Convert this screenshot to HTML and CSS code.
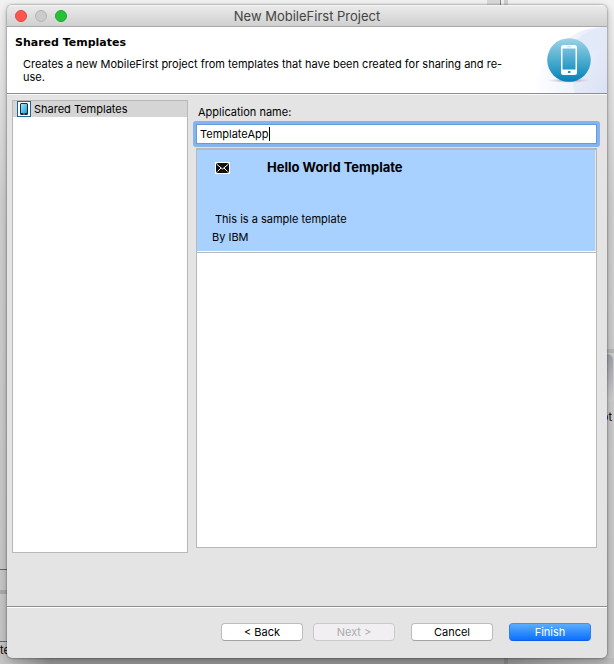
FILE: index.html
```html
<!DOCTYPE html>
<html lang="en">
<head>
<meta charset="utf-8">
<title>New MobileFirst Project</title>
<link rel="stylesheet" href="styles.css">
</head>
<body>
<div class="desktop" aria-hidden="true">
  <span class="mark tab-a"></span>
  <span class="mark tab-b"></span>
  <span class="mark rule-a"></span>
  <span class="mark rule-b"></span>
  <span class="mark rule-c"></span>
  <span class="mark rule-d"></span>
  <span class="mark sash"></span>
  <span class="mark panel"></span>
  <span class="mark word-left">te</span>
  <span class="mark word-right">ot</span>
</div>
<form class="window">
  <div class="titlebar">
    <div class="lights">
      <button type="button" class="light close" aria-label="Close"></button>
      <button type="button" class="light minimize" aria-label="Minimize" disabled></button>
      <button type="button" class="light zoom" aria-label="Zoom"></button>
    </div>
    <div class="title">New MobileFirst Project</div>
  </div>
  <header class="banner">
    <div class="banner-text">
      <h1>Shared Templates</h1>
      <p>Creates a new MobileFirst project from templates that have been created for sharing and re-<br>use.</p>
    </div>
    <svg class="banner-art" viewBox="0 0 76 66" aria-hidden="true">
      <defs>
        <linearGradient id="fade" x1="0" x2="1"><stop offset="0" stop-color="#fff"/><stop offset="1" stop-color="#e4eafa"/></linearGradient>
        <linearGradient id="sweep" x1="0" x2="1" y1="0" y2="1"><stop offset="0" stop-color="#eef2fc"/><stop offset="1" stop-color="#d8def4"/></linearGradient>
        <linearGradient id="disc" x2="0" y2="1"><stop offset="0" stop-color="#9dd2e6"/><stop offset=".5" stop-color="#4daed0"/><stop offset="1" stop-color="#0480b8"/></linearGradient>
        <linearGradient id="glass" x2="0" y2="1"><stop offset="0" stop-color="#75bfdb"/><stop offset="1" stop-color="#2497c4"/></linearGradient>
        <radialGradient id="shade"><stop offset="0" stop-color="#8d7488"/><stop offset="1" stop-color="#d6d0e0" stop-opacity="0"/></radialGradient>
      </defs>
      <path d="M0 66C6 44 22 18 46 6C56 1 66 0 76 0V66Z" fill="url(#fade)"/>
      <path d="M44 66C36 44 50 24 76 21V66Z" fill="url(#sweep)" opacity=".8"/>
      <path d="M44 14C52 6 63 1 76 0V21C64 22 56 27 52 32Z" fill="#e2eaf9"/>
      <ellipse cx="38" cy="53.500" rx="23" ry="2.500" fill="url(#shade)"/>
      <circle cx="38" cy="33" r="21.800" fill="url(#disc)"/>
      <rect x="30" y="18" width="16" height="30" rx="2.500" fill="#fff"/>
      <rect x="31.500" y="21.500" width="13" height="21" fill="url(#glass)"/>
      <rect x="36" y="19.500" width="4" height=".7" fill="#8fcbe1"/>
      <rect x="37" y="44" width="2.500" height="2" rx=".6" fill="#1b8fc0"/>
    </svg>
  </header>
  <main class="content">
    <ul class="tree">
      <li class="tree-item">
        <svg class="tree-icon" viewBox="0 0 14 16" aria-hidden="true">
          <defs><linearGradient id="screen" x2="1" y2="1"><stop offset="0" stop-color="#9be6ff"/><stop offset="1" stop-color="#1f9ed8"/></linearGradient></defs>
          <rect x=".5" y=".5" width="13" height="15" fill="#fff" stroke="#1b679b"/>
          <rect x="3" y="2" width="8" height="12" rx="1.500" fill="#202830"/>
          <rect x="4" y="3" width="6" height="9" fill="url(#screen)"/>
          <rect x="6" y="12.500" width="2" height="1" fill="#8a949b"/>
        </svg>
        <span>Shared Templates</span>
      </li>
    </ul>
    <section class="details">
      <label for="app-name">Application name:</label>
      <div class="field">
        <input id="app-name" type="text" value="TemplateApp">
        <div class="caret-line" aria-hidden="true"><span class="ghost">TemplateApp</span><span class="caret"></span></div>
      </div>
      <div class="templates">
        <article class="template">
          <svg class="mail" viewBox="0 0 15 12" aria-hidden="true">
            <rect width="15" height="12" fill="#fff"/>
            <rect x="1" y="1" width="13" height="10" rx="2" fill="#111"/>
            <path d="M2 2.500L7.500 7L13 2.500M2.500 9.500L6 6M12.500 9.500L9 6" fill="none" stroke="#fff"/>
          </svg>
          <h2>Hello World Template</h2>
          <p class="summary">This is a sample template</p>
          <p class="author">By IBM</p>
        </article>
      </div>
    </section>
  </main>
  <footer class="actions">
    <button type="button">&lt; Back</button>
    <button type="button" disabled>Next &gt;</button>
    <button type="button" class="cancel">Cancel</button>
    <button type="submit" class="primary">Finish</button>
  </footer>
</form>
</body>
</html>
```
FILE: styles.css
```css
* {
  box-sizing: border-box;
}

body {
  margin: 0;
  min-height: 100vh;
  padding: 5px 7px 6px;
  display: flex;
  position: relative;
  overflow: hidden;
  background: linear-gradient(#f2f2f2, #d0d0d0 30%, #c4c4c4);
  color: #000;
  font: 11px/14px Inter, "Liberation Sans", sans-serif;
}

h1, h2, p, ul {
  margin: 0;
  padding: 0;
}

/* Workbench visible behind the dialog */
.desktop {
  position: absolute;
  inset: 0;
  overflow: hidden;
  background: linear-gradient(to right, transparent 10px, #969696 50px, #969696 510px, #bcbcbc 610px) bottom / 100% 6px no-repeat;
}

.mark {
  position: absolute;
}

.tab-a {
  left: 487px;
  top: 0;
  width: 14px;
  height: 5px;
  background: #dadada;
  border-right: 1px solid #888;
}

.tab-b {
  left: 504px;
  top: 0;
  width: 4px;
  height: 5px;
  background: #d0d0d0;
}

.rule-a,
.rule-c {
  left: 0;
  width: 7px;
  height: 1px;
  background: #666;
}

.rule-a {
  top: 569px;
}

.rule-b {
  left: 0;
  top: 590px;
  width: 7px;
  height: 4px;
  background: #aaa;
}

.rule-c {
  top: 641px;
}

.rule-d {
  right: 0;
  top: 349px;
  width: 7px;
  height: 4px;
  background: #b6b6b6;
}

.sash {
  left: 504px;
  bottom: 0;
  width: 4px;
  height: 6px;
  background: #858585;
}

.panel {
  right: 1px;
  top: 354px;
  width: 12px;
  height: 48px;
  border-radius: 0 6px 0 0;
  background: linear-gradient(#a2a3ab, #d0d0d0);
}

.word-left {
  left: 0;
  top: 643px;
}

.word-right {
  right: 2px;
  top: 410px;
}

.window {
  flex: 1;
  display: flex;
  flex-direction: column;
  position: relative;
  overflow: hidden;
  border-radius: 5px;
  background: #e4e4e4;
  box-shadow: 0 0 2px rgba(0, 0, 0, .6), 0 3px 10px rgba(0, 0, 0, .25);
}

.titlebar {
  height: 22px;
  display: grid;
  grid-template-columns: 1fr auto 1fr;
  align-items: center;
  border-bottom: 1px solid #a8a8a8;
  background: linear-gradient(#ebebeb, #d0d0d0);
  box-shadow: inset 0 1px #f5f5f5;
}

.lights {
  display: flex;
  gap: 8px;
  padding-left: 8px;
}

.light {
  width: 12px;
  height: 12px;
  padding: 0;
  border: 1px solid;
  border-radius: 50%;
}

.close {
  background: #ff5650;
  border-color: #e2443f;
}

.minimize {
  background: #cbcbcb;
  border-color: #b3b3b3;
}

.zoom {
  background: #25c138;
  border-color: #1aa62b;
}

.title {
  color: #444;
  font-size: 13px;
}

.banner {
  height: 67px;
  display: flex;
  justify-content: space-between;
  border-bottom: 1px solid #8e8e8e;
  background: #fff;
}

.banner-text {
  padding: 8px 0 0 8px;
}

h1 {
  font: bold 11px/16px "DejaVu Sans", sans-serif;
}

.banner p {
  padding: 7px 0 0 8px;
  line-height: 13px;
  white-space: nowrap;
}

.banner-art {
  width: 76px;
  height: 66px;
  flex: none;
}

.content {
  flex: 1;
  display: grid;
  grid-template-columns: 176px 1fr;
  gap: 5px;
  padding: 5px 7px 53px 5px;
  border-top: 1px solid #f8f8f8;
}

.tree {
  list-style: none;
  border: 1px solid #b8b8b8;
  background: #fff;
}

.tree-item {
  display: flex;
  align-items: center;
  gap: 3px;
  height: 16px;
  padding-left: 4px;
  background: #d5d5d5;
}

.tree-icon {
  width: 14px;
  height: 16px;
}

.details {
  display: flex;
  flex-direction: column;
  padding: 5px 0;
}

.details label {
  padding-left: 5px;
  margin-bottom: 2px;
}

.field {
  position: relative;
  border: 3px solid #83b4ee;
  border-radius: 3px;
}

.field input {
  display: block;
  width: 100%;
  height: 20px;
  padding: 0 3px;
  border: 1px solid #659bdc;
  outline: 0;
  background: #fff;
  color: #000;
  font: inherit;
}

.caret-line {
  position: absolute;
  left: 4px;
  top: 3px;
  display: flex;
  pointer-events: none;
}

.ghost {
  visibility: hidden;
}

.caret {
  width: 1px;
  height: 14px;
  margin-left: 1px;
  background: #000;
}

.templates {
  flex: 1;
  margin: 1px 3px 0;
  border: 1px solid #b8b8b8;
  border-top-width: 2px;
  background: #fff;
}

.template {
  display: grid;
  grid-template-columns: 37px 1fr;
  column-gap: 15px;
  padding: 9px 0 8px 18px;
  border-bottom: 1px solid #b8b8b8;
  box-shadow: inset 0 -1px #fff, inset -1px 0 #e4e4e4;
  background: #a8d1ff;
}

.mail {
  width: 15px;
  height: 12px;
  margin-top: 3px;
}

h2 {
  font-size: 13px;
  line-height: 16px;
}

.summary,
.author {
  grid-column: 1 / -1;
}

.summary {
  margin-top: 37px;
}

.author {
  margin: 4px 0 0 -3px;
}

.actions {
  display: flex;
  gap: 10px;
  height: 52px;
  padding: 16px 16px 0;
  justify-content: flex-end;
  border-top: 1px solid #8e8e8e;
  box-shadow: inset 0 1px #fff;
}

.actions button {
  width: 82px;
  height: 18px;
  padding: 0;
  border: 1px solid #bcbcbc;
  border-bottom-color: #a4a4a4;
  border-radius: 4px;
  background: #fff;
  color: #000;
  font: inherit;
}

.actions button:disabled {
  border-color: #cacaca;
  background: #f1eff1;
  color: #acacac;
}

.actions .cancel {
  margin: 0 6px;
}

.actions .primary {
  border-color: #3f92f5 #2a7df2 #0c5fe8;
  background: linear-gradient(#5caefb, #0a70ff);
  color: #fff;
}
```
